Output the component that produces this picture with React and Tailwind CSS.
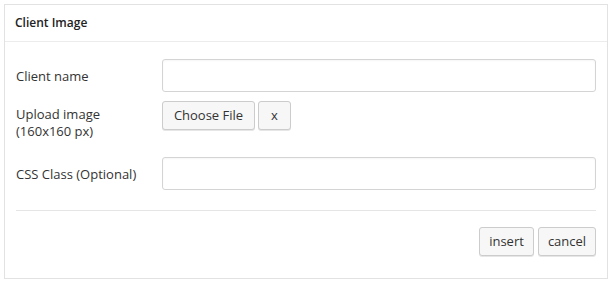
const font = { fontFamily: '"Open Sans", "Liberation Sans", sans-serif' };

const Btn = ({ children, className = '' }) => (
  <button
    type="button"
    className={`h-[29px] rounded-[3px] border border-[#cccccc] bg-[#f7f7f7] text-[13px] leading-none text-[#333] shadow-[0_1px_0_#e6e6e6] ${className}`}
  >
    {children}
  </button>
);

const Field = () => (
  <input
    type="text"
    className="h-[33px] flex-1 rounded-[3px] border border-[#d4d4d4] bg-white px-2 text-[13px] shadow-[inset_0_1px_2px_rgba(0,0,0,0.04)] outline-none"
  />
);

export default function App() {
  return (
    <div className="h-[284px] w-[613px] bg-white pl-[4px] pt-[4px]" style={font}>
      <div className="h-[275px] w-[604px] border border-[#e2e2e2] bg-white">
        <div className="flex h-[37px] items-center border-b border-[#ececec] px-[10px]">
          <h3 className="text-[12px] font-semibold text-[#222]">Client Image</h3>
        </div>

        <div className="px-[11px] pt-[17px]">
          <div className="flex items-center">
            <label className="w-[146px] pt-[2px] text-[13px] text-[#333]">Client name</label>
            <Field />
          </div>

          <div className="mt-[9px] flex items-start">
            <label className="mt-[5px] w-[146px] text-[13px] leading-[17px] text-[#333]">
              <span className="block">Upload image</span>
              <span className="block">(160x160 px)</span>
            </label>
            <div className="flex gap-[3px]">
              <Btn className="w-[93px]">Choose File</Btn>
              <Btn className="w-[33px]">x</Btn>
            </div>
          </div>

          <div className="mt-[17px] flex items-center">
            <label className="w-[146px] pt-[2px] text-[13px] text-[#333]">CSS Class (Optional)</label>
            <Field />
          </div>

          <div className="mt-[20px] border-t border-[#e5e5e5]" />

          <div className="flex justify-end gap-[4px] pt-[16px]">
            <Btn className="w-[55px]">insert</Btn>
            <Btn className="w-[58px]">cancel</Btn>
          </div>
        </div>
      </div>
    </div>
  );
}
